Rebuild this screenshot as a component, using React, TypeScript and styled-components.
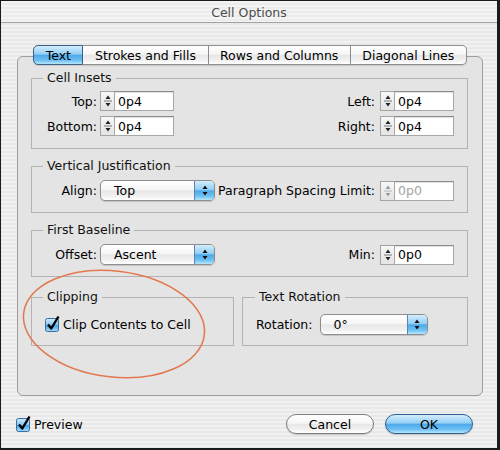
import React from "react";
import styled, { createGlobalStyle, css } from "styled-components";

const GlobalStyle = createGlobalStyle`
  html, body { margin: 0; padding: 0; background: #fff; }
  body {
    font-family: "DejaVu Sans", "Liberation Sans", sans-serif;
    font-size: 12.5px;
    color: #000;
  }
  * { box-sizing: border-box; }
`;

const stripes = `repeating-linear-gradient(to bottom, #f1f1f1 0px, #f1f1f1 2px, #e8e8e8 2px, #e8e8e8 4px)`;
const titleStripes = `repeating-linear-gradient(to bottom, #f4f4f4 0px, #f4f4f4 2px, #ececec 2px, #ececec 4px)`;
const aquaWhite = `linear-gradient(to bottom, #ffffff 0%, #f6f6f6 45%, #e7e7e7 52%, #f1f1f1 80%, #ffffff 100%)`;
const aquaBlue = `linear-gradient(to bottom, #d4edfd 0%, #93cff5 45%, #4ea9ea 52%, #6fc1f3 80%, #b6e6fd 100%)`;

const Window = styled.div`
  position: relative;
  width: 500px;
  height: 450px;
  border-style: solid;
  border-color: #1b1b1b;
  border-width: 1px 3px 2px 1px;
  background: ${stripes};
  display: flex;
  flex-direction: column;
  overflow: hidden;
`;

const TitleBar = styled.div`
  flex: none;
  height: 22px;
  border-bottom: 1px solid #a2a2a2;
  background: ${titleStripes};
  display: flex;
  align-items: center;
  justify-content: center;
  color: #4c4c4c;
  font-size: 12.5px;
  padding-top: 1px;
`;

const Body = styled.div`
  flex: 1;
  display: flex;
  flex-direction: column;
  padding: 22px 14px 0 16px;
`;

const TabBar = styled.div`
  position: relative;
  z-index: 1;
  display: flex;
  justify-content: center;
  height: 20px;
  margin-bottom: -9px;
`;

const Tab = styled.div<{ $active?: boolean; $first?: boolean; $last?: boolean }>`
  height: 20px;
  padding: 0 11.5px;
  display: flex;
  align-items: center;
  white-space: nowrap;
  background: ${aquaWhite};
  border: 1px solid #8f8f8f;
  border-left: none;
  box-shadow: 0 1px 1px rgba(0, 0, 0, 0.12);
  ${(p) =>
    p.$first &&
    css`
      border-left: 1px solid #8f8f8f;
      border-radius: 5px 0 0 5px;
    `}
  ${(p) =>
    p.$last &&
    css`
      border-radius: 0 5px 5px 0;
    `}
  ${(p) =>
    p.$active &&
    css`
      background: ${aquaBlue};
      border-color: #3f5f84;
    `}
`;

const Panel = styled.div`
  border: 1px solid #9d9d9d;
  border-radius: 6px;
  background: #e4e4e4;
  padding: 13px 14px 49px 13px;
  display: flex;
  flex-direction: column;
  gap: 9px;
`;

const Group = styled.fieldset<{ $pt: number; $pb: number; $pl?: number; $w?: number }>`
  margin: 0;
  min-width: 0;
  border: 1px solid #b2b2b2;
  padding: ${(p) => `${p.$pt}px 13px ${p.$pb}px ${p.$pl ?? 15}px`};
  ${(p) => (p.$w ? css`flex: none; width: ${p.$w}px;` : css`flex: 1;`)}
  display: flex;
  flex-direction: column;
  gap: 5px;
`;

const Legend = styled.legend<{ $ml?: number }>`
  padding: 0 4px;
  margin-left: ${(p) => p.$ml ?? -4}px;
  line-height: 16px;
  font-size: 12.5px;
  color: #111;
`;

const BottomGroups = styled.div`
  display: flex;
  gap: 8px;
  margin-top: 3px;
`;

const Row = styled.div`
  display: flex;
  align-items: center;
  height: 20px;
`;

const TallRow = styled(Row)`
  height: 21px;
`;

const Label = styled.span<{ $w?: number; $mr?: number }>`
  ${(p) => p.$w && css`width: ${p.$w}px; text-align: right; flex: none;`}
  margin-right: ${(p) => p.$mr ?? 3}px;
  white-space: nowrap;
`;

const RightField = styled.div`
  margin-left: auto;
  display: flex;
  align-items: center;
`;

const StepperBox = styled.div`
  width: 14px;
  height: 20px;
  flex: none;
  border: 1px solid #a4a4a4;
  border-right: none;
  background: linear-gradient(to bottom, #f7f7f7, #e4e4e4);
  display: flex;
  align-items: center;
  justify-content: center;
`;

const Input = styled.div<{ $disabled?: boolean }>`
  width: 60px;
  height: 20px;
  flex: none;
  background: #fff;
  border: 1px solid #a8a8a8;
  border-top-color: #8a8a8a;
  box-shadow: inset 0 1px 1px rgba(0, 0, 0, 0.12);
  padding: 0 3px;
  display: flex;
  align-items: center;
  color: ${(p) => (p.$disabled ? "#a3a3a3" : "#000")};
`;

const PopupBox = styled.div<{ $w: number }>`
  width: ${(p) => p.$w}px;
  height: 21px;
  flex: none;
  display: flex;
  border: 1px solid #8d8d8d;
  border-radius: 5px;
  background: ${aquaWhite};
  box-shadow: 0 1px 1px rgba(0, 0, 0, 0.15);
  overflow: hidden;
`;

const PopupText = styled.span`
  flex: 1;
  display: flex;
  align-items: center;
  padding-left: 13px;
`;

const PopupArrow = styled.span`
  width: 20px;
  flex: none;
  background: ${aquaBlue};
  border-left: 1px solid #5f84ad;
  display: flex;
  align-items: center;
  justify-content: center;
`;

const CheckWrap = styled.span<{ $ml?: number }>`
  display: inline-flex;
  width: 15px;
  height: 15px;
  flex: none;
  margin-left: ${(p) => p.$ml ?? 0}px;
  margin-right: 3px;
`;

const Footer = styled.div`
  margin-top: 18px;
  height: 20px;
  display: flex;
  align-items: center;
  padding: 0 10px 0 0;
  margin-left: -1px;
`;

const Buttons = styled.div`
  margin-left: auto;
  display: flex;
  gap: 11px;
`;

const Button = styled.div<{ $primary?: boolean }>`
  width: 88px;
  height: 20px;
  border-radius: 10px;
  border: 1px solid #7e7e7e;
  background: ${aquaWhite};
  box-shadow: 0 1px 1px rgba(0, 0, 0, 0.18);
  display: flex;
  align-items: center;
  justify-content: center;
  ${(p) =>
    p.$primary &&
    css`
      background: ${aquaBlue};
      border-color: #2f5f8e;
    `}
`;

const Overlay = styled.svg`
  position: absolute;
  left: -1px;
  top: -1px;
  pointer-events: none;
`;

function Stepper({ disabled }: { disabled?: boolean }) {
  const c = disabled ? "#9a9a9a" : "#222";
  return (
    <StepperBox>
      <svg width="10" height="16" viewBox="0 0 10 16">
        <polygon points="5,2.5 2.5,6 7.5,6" fill={c} />
        <line x1="1" y1="8" x2="9" y2="8" stroke={disabled ? "#b5b5b5" : "#777"} strokeWidth="1" />
        <polygon points="2.5,10 7.5,10 5,13.5" fill={c} />
      </svg>
    </StepperBox>
  );
}

function NumField({ value, disabled }: { value: string; disabled?: boolean }) {
  return (
    <>
      <Stepper disabled={disabled} />
      <Input $disabled={disabled}>{value}</Input>
    </>
  );
}

function Popup({ w, value }: { w: number; value: string }) {
  return (
    <PopupBox $w={w}>
      <PopupText>{value}</PopupText>
      <PopupArrow>
        <svg width="8" height="13" viewBox="0 0 8 13">
          <polygon points="4,1.5 1.5,5 6.5,5" fill="#111" />
          <polygon points="1.5,8 6.5,8 4,11.5" fill="#111" />
        </svg>
      </PopupArrow>
    </PopupBox>
  );
}

function CheckBox({ ml }: { ml?: number }) {
  return (
    <CheckWrap $ml={ml}>
      <svg width="15" height="15" viewBox="0 0 15 15" style={{ overflow: "visible" }}>
        <defs>
          <linearGradient id="cbg" x1="0" y1="0" x2="0" y2="1">
            <stop offset="0" stopColor="#cdebfd" />
            <stop offset="0.45" stopColor="#8ccbf4" />
            <stop offset="0.55" stopColor="#48a6e9" />
            <stop offset="1" stopColor="#a7defb" />
          </linearGradient>
        </defs>
        <rect x="0.5" y="1.5" width="13" height="13" rx="2" fill="url(#cbg)" stroke="#3c6c9f" />
        <path d="M3 7.5 L6.3 11.5 L13.5 -0.5" fill="none" stroke="#000" strokeWidth="2.4" strokeLinejoin="round" />
      </svg>
    </CheckWrap>
  );
}

export default function App() {
  return (
    <>
      <GlobalStyle />
      <Window>
        <TitleBar>Cell Options</TitleBar>
        <Body>
          <TabBar>
            <Tab $active $first>Text</Tab>
            <Tab>Strokes and Fills</Tab>
            <Tab>Rows and Columns</Tab>
            <Tab $last>Diagonal Lines</Tab>
          </TabBar>
          <Panel>
            <Group $pt={5} $pb={12}>
              <Legend>Cell Insets</Legend>
              <Row>
                <Label $w={50}>Top:</Label>
                <NumField value="0p4" />
                <RightField>
                  <Label $mr={5}>Left:</Label>
                  <NumField value="0p4" />
                </RightField>
              </Row>
              <Row>
                <Label $w={50}>Bottom:</Label>
                <NumField value="0p4" />
                <RightField>
                  <Label $mr={5}>Right:</Label>
                  <NumField value="0p4" />
                </RightField>
              </Row>
            </Group>

            <Group $pt={6} $pb={11}>
              <Legend>Vertical Justification</Legend>
              <TallRow>
                <Label $w={50}>Align:</Label>
                <Popup w={115} value="Top" />
                <RightField>
                  <Label $mr={5}>Paragraph Spacing Limit:</Label>
                  <NumField value="0p0" disabled />
                </RightField>
              </TallRow>
            </Group>

            <Group $pt={6} $pb={11}>
              <Legend>First Baseline</Legend>
              <TallRow>
                <Label $w={50}>Offset:</Label>
                <Popup w={115} value="Ascent" />
                <RightField>
                  <Label $mr={5}>Min:</Label>
                  <NumField value="0p0" />
                </RightField>
              </TallRow>
            </Group>

            <BottomGroups>
              <Group $pt={9} $pb={10} $w={203}>
                <Legend>Clipping</Legend>
                <TallRow>
                  <CheckBox ml={-2} />
                  <span>Clip Contents to Cell</span>
                </TallRow>
              </Group>
              <Group $pt={9} $pb={10} $pl={13}>
                <Legend $ml={-1}>Text Rotation</Legend>
                <TallRow>
                  <Label $mr={7}>Rotation:</Label>
                  <Popup w={108} value="0°" />
                </TallRow>
              </Group>
            </BottomGroups>
          </Panel>

          <Footer>
            <CheckBox />
            <span>Preview</span>
            <Buttons>
              <Button>Cancel</Button>
              <Button $primary>OK</Button>
            </Buttons>
          </Footer>
        </Body>
        <Overlay width="500" height="450" viewBox="0 0 500 450">
          <ellipse
            cx="114"
            cy="324"
            rx="91"
            ry="53"
            transform="rotate(7 114 324)"
            fill="none"
            stroke="#e2784f"
            strokeWidth="1.5"
          />
        </Overlay>
      </Window>
    </>
  );
}
